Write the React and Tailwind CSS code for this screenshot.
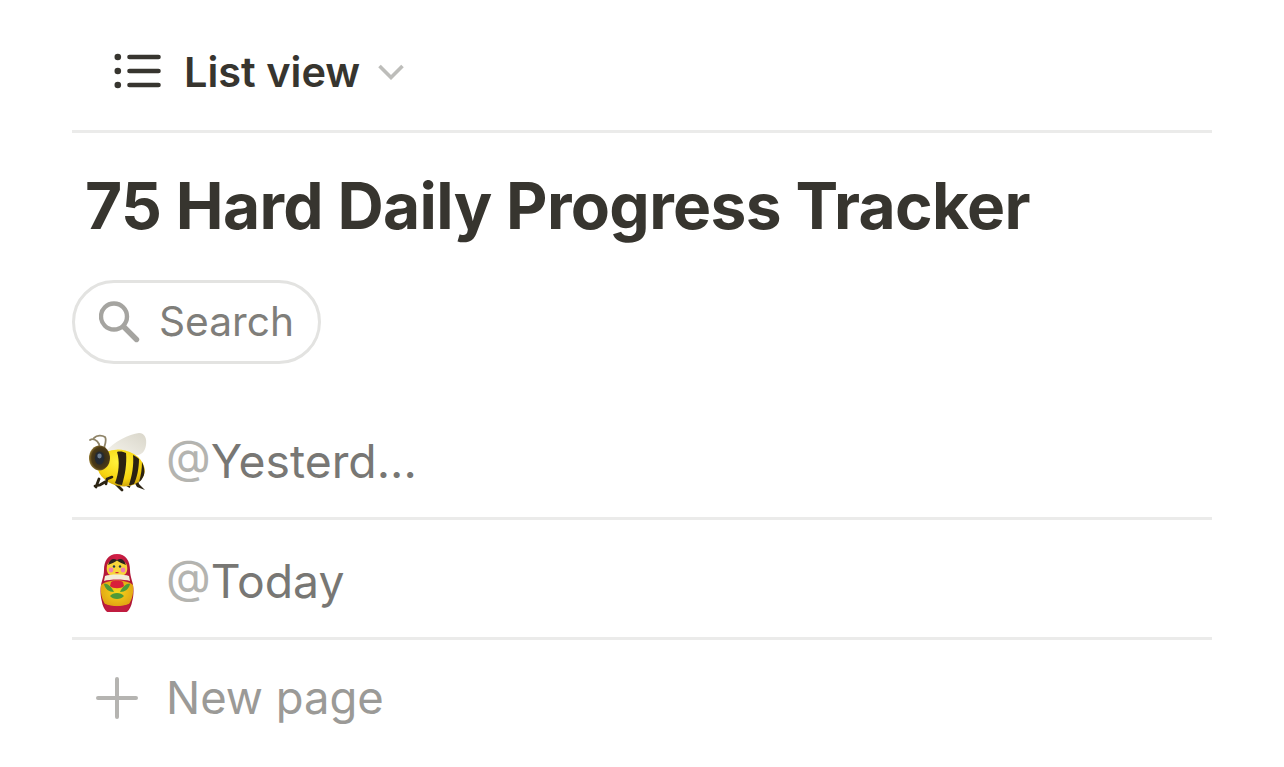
import React from "react";

function ListIcon() {
  return (
    <svg width="48" height="36" viewBox="0 0 48 36" fill="none" className="shrink-0 -translate-y-px">
      <circle cx="3.8" cy="4" r="3.3" fill="#37352f" />
      <circle cx="3.8" cy="18" r="3.3" fill="#37352f" />
      <circle cx="3.8" cy="32" r="3.3" fill="#37352f" />
      <path d="M15.5 4H44.5M15.5 18H44.5M15.5 32H44.5" stroke="#37352f" strokeWidth="4.6" strokeLinecap="round" />
    </svg>
  );
}

function Chevron() {
  return (
    <svg width="26" height="16" viewBox="0 0 26 16" fill="none" className="shrink-0">
      <path d="M1.5 2L13 13.5L24.5 2" stroke="#bdbdba" strokeWidth="3.6" />
    </svg>
  );
}

function SearchIcon() {
  return (
    <svg width="42" height="42" viewBox="0 0 42 42" fill="none" className="shrink-0">
      <circle cx="15" cy="15.5" r="13" stroke="#a5a4a0" strokeWidth="4.4" />
      <path d="M25 26L37.5 38.5" stroke="#a5a4a0" strokeWidth="5.4" strokeLinecap="round" />
    </svg>
  );
}

function PlusIcon() {
  return (
    <svg width="42" height="42" viewBox="0 0 42 42" fill="none" className="shrink-0">
      <path d="M21 2V40M2 21H40" stroke="#b5b4b1" strokeWidth="4" strokeLinecap="round" />
    </svg>
  );
}

function Bee() {
  return (
    <svg width="60" height="60" viewBox="-2 0 60 60" className="shrink-0">
      <defs>
        <radialGradient id="beeBody" cx="40%" cy="35%" r="70%">
          <stop offset="0%" stopColor="#fff23c" />
          <stop offset="70%" stopColor="#f6d30e" />
          <stop offset="100%" stopColor="#c99e0c" />
        </radialGradient>
        <linearGradient id="beeWing" x1="0" y1="1" x2="1" y2="0">
          <stop offset="0%" stopColor="#f7f5ee" />
          <stop offset="100%" stopColor="#d9d6ca" />
        </linearGradient>
        <radialGradient id="beeHead" cx="55%" cy="50%" r="60%">
          <stop offset="0%" stopColor="#26241e" />
          <stop offset="70%" stopColor="#4c3a16" />
          <stop offset="100%" stopColor="#ad8f3a" />
        </radialGradient>
      </defs>
      <path d="M10 47L7 55M16 50L11 53L6 54M25 50L33 58M43 46L40 54L33 50" stroke="#2c2414" strokeWidth="2.8" fill="none" strokeLinecap="round" />
      <path d="M48 44L50 52L56 58L48 55L44 48Z" fill="#2b2212" />
      <path d="M17 19C25 10 40 2 50 1C56 1 58 7 57 13C56 20 52 24 45 23L27 25C23 26 19 24 17 19Z" fill="url(#beeWing)" />
      <path d="M1 8C4 6 8 8 10 12C10 13 11 15 11 16M5 6C8 3 13 3 16 5C18 8 16 12 15 16" stroke="#8f8468" strokeWidth="1.8" fill="none" strokeLinecap="round" />
      <ellipse cx="32" cy="36" rx="24" ry="18" transform="rotate(14 32 36)" fill="url(#beeBody)" />
      <path d="M28 20C31 19 35 20 37 21C38 32 36 43 33 53C31 53 28 52 26 51C30 41 31 29 28 20Z" fill="#2b2212" />
      <path d="M44 23C46 24 48 25 50 27C50 36 48 46 45 52C43 53 41 53 40 53C43 44 45 33 44 23Z" fill="#2b2212" />
      <path d="M53 30C55 34 56 39 55 43C53 47 52 49 50 50C52 43 53 37 53 30Z" fill="#2b2212" />
      <ellipse cx="10.5" cy="26" rx="10.5" ry="12.5" fill="url(#beeHead)" />
      <ellipse cx="10.5" cy="26" rx="4.6" ry="6.6" fill="#232a33" />
      <ellipse cx="10.5" cy="24" rx="2.2" ry="2.4" fill="#6e7f92" />
      <path d="M23 45L18 47L17 52" stroke="#2c2414" strokeWidth="2.6" fill="none" strokeLinecap="round" />
    </svg>
  );
}

function Doll() {
  return (
    <svg width="36" height="64" viewBox="0 -4 36 64" className="shrink-0">
      <defs>
        <linearGradient id="dollRed" x1="0" y1="0" x2="1" y2="0">
          <stop offset="0%" stopColor="#a81533" />
          <stop offset="50%" stopColor="#d41f48" />
          <stop offset="100%" stopColor="#a81533" />
        </linearGradient>
        <radialGradient id="dollBody" cx="50%" cy="45%" r="60%">
          <stop offset="0%" stopColor="#f6d81c" />
          <stop offset="100%" stopColor="#e0a012" />
        </radialGradient>
      </defs>
      <path d="M18 0C9 0 5 7 5 16C5 20 4 23 3 27C1 33 1 41 3 48C4 54 7 58 10 58H26C29 58 32 54 33 48C35 41 35 33 33 27C32 23 31 20 31 16C31 7 27 0 18 0Z" fill="url(#dollRed)" />
      <path d="M2 31C8 25 28 25 34 31C35 38 33 46 30 50C22 53 14 53 6 50C3 46 1 38 2 31Z" fill="url(#dollBody)" />
      <path d="M8 12C9 4 27 4 28 12C29 17 27 20 25 21H11C9 20 7 17 8 12Z" fill="#f7d53a" />
      <path d="M9 11C11 5 14 4 18 6C22 4 25 5 27 11C24 10 20 8 18 6.5C16 8 12 10 9 11Z" fill="#2a2320" />
      <circle cx="12" cy="16" r="2.4" fill="#f07fb0" />
      <circle cx="24" cy="16" r="2.4" fill="#f07fb0" />
      <circle cx="15" cy="12.5" r="1.2" fill="#23384e" />
      <circle cx="21" cy="12.5" r="1.2" fill="#23384e" />
      <path d="M16.5 18.6H19.5" stroke="#d0283c" strokeWidth="1.2" />
      <path d="M6 22C11 20 25 20 30 22L31 27C25 25 11 25 5 27Z" fill="#f3ecd6" />
      <path d="M5 30C8 29 12 32 15 38C10 38 6 35 5 30ZM31 30C28 29 24 32 21 38C26 38 30 35 31 30ZM11 42C14 38 22 38 25 42C22 46 14 46 11 42Z" fill="#4f9a38" />
      <path d="M12 28C15 26 21 26 24 28L25 32C22 35 14 35 11 32Z" fill="#d9203a" />
      <path d="M5 50C14 53 22 53 31 50L29 57C28 58 27 58 26 58H10C9 58 8 58 7 57Z" fill="#c01c40" />
    </svg>
  );
}

function Row({ icon, text }) {
  return (
    <div className="flex items-center h-[120px] border-b-[3px] border-[#ebebea] pt-[6px]">
      <div className="w-[90px] mr-[4px] flex justify-center shrink-0">{icon}</div>
      <span className="text-[46.3px] leading-none text-[#787774]">
        <span className="text-[#b4b4b0]">@</span>{text}
      </span>
    </div>
  );
}

export default function App() {
  return (
    <div className="w-[1284px] h-[767px] bg-white overflow-hidden px-[72px] font-['Inter',sans-serif]">
      <div className="flex items-center h-[133px] border-b-[3px] border-[#ebebea] pl-[42px] pt-[14px]">
        <ListIcon />
        <span className="ml-[22px] text-[41.5px] font-semibold text-[#37352f] leading-none translate-y-px">List view</span>
        <span className="ml-[18px]"><Chevron /></span>
      </div>
      <h1 className="mt-[37px] ml-[13px] text-[64px] leading-[72px] font-bold text-[#37352f] tracking-[-0.01em] whitespace-nowrap">
        75 Hard Daily Progress Tracker
      </h1>
      <div className="mt-[38px] flex items-center w-[249px] h-[84px] rounded-full border-[3px] border-[#e3e3e1] pl-[24px]">
        <SearchIcon />
        <span className="ml-[18px] text-[40.7px] leading-none text-[#7f7e7a]">Search</span>
      </div>
      <div className="mt-[36px]">
        <Row icon={<Bee />} text="Yesterd..." />
        <Row icon={<Doll />} text="Today" />
      </div>
      <div className="flex items-center h-[116px]">
        <div className="w-[90px] mr-[4px] flex justify-center shrink-0"><PlusIcon /></div>
        <span className="text-[45.4px] leading-none text-[#9b9a97]">New page</span>
      </div>
    </div>
  );
}
